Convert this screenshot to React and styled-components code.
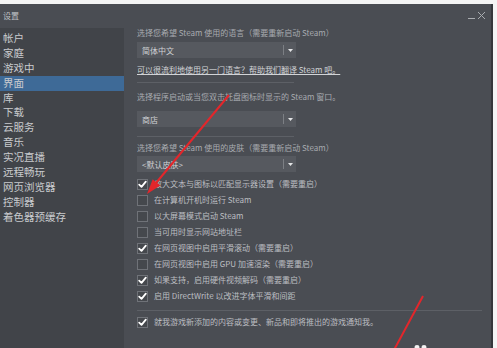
import React from 'react';
import styled, { createGlobalStyle } from 'styled-components';

const Global = createGlobalStyle`
  html, body { margin: 0; padding: 0; background: #f4f4f4; }
  body {
    width: 497px; height: 348px; overflow: hidden;
    font-family: "Noto Sans CJK SC", "Noto Sans", sans-serif;
  }
  * { box-sizing: border-box; }
`;

const Page = styled.div`
  position: relative;
  width: 497px;
  height: 348px;
  padding-top: 4px;
  background: #f4f4f4;
`;

const Window = styled.div`
  width: 493px;
  height: 344px;
  background: #4a4d53;
  border-right: 2px solid #35373b;
  display: flex;
  flex-direction: column;
  overflow: hidden;
`;

const TitleBar = styled.div`
  height: 24px;
  flex: none;
  display: flex;
  align-items: center;
  justify-content: space-between;
  padding: 0 4px 0 3px;
`;

const Title = styled.span`
  font-size: 8px;
  line-height: 10px;
  color: #bfc1c5;
`;

const Body = styled.div`
  flex: 1;
  display: flex;
  min-height: 0;
`;

const Sidebar = styled.nav`
  width: 124px;
  flex: none;
  background: #414449;
  padding-top: 3px;
  display: flex;
  flex-direction: column;
`;

const NavItem = styled.div`
  height: 14.9px;
  line-height: 14.9px;
  padding-left: 3px;
  font-size: 10.5px;
  color: #c9cbce;
  white-space: nowrap;
  background: ${(p) => (p.$active ? '#3e6a97' : 'transparent')};
`;

const Content = styled.main`
  flex: 1;
  padding-left: 13px;
  display: flex;
  flex-direction: column;
  align-items: flex-start;
`;

const Label = styled.div`
  font-size: 8px;
  line-height: 10px;
  height: 10px;
  color: #a8abb0;
  white-space: nowrap;
  margin-top: ${(p) => p.$mt || 0}px;
`;

const Link = styled.a`
  font-size: 8px;
  line-height: 10px;
  height: 10px;
  color: #d2d4d7;
  text-decoration: underline;
  white-space: nowrap;
  margin-top: ${(p) => p.$mt || 0}px;
`;

const Select = styled.div`
  width: 159px;
  height: 16px;
  background: #56595f;
  display: flex;
  align-items: center;
  margin-top: ${(p) => p.$mt || 0}px;
`;

const SelectText = styled.span`
  flex: 1;
  padding-left: 5px;
  font-size: 8px;
  color: #d0d2d5;
  white-space: nowrap;
`;

const SelectDivider = styled.span`
  width: 1px;
  height: 10px;
  background: #7c7f84;
`;

const SelectArrow = styled.span`
  width: 12px;
  display: flex;
  justify-content: center;
  align-items: center;
`;

const Rule = styled.div`
  height: 1px;
  width: ${(p) => p.$w}px;
  background: #5d6066;
  margin-top: ${(p) => p.$mt || 0}px;
`;

const CheckRow = styled.div`
  height: 16px;
  display: flex;
  align-items: center;
  gap: 6px;
  margin-top: ${(p) => p.$mt || 0}px;
`;

const Box = styled.span`
  width: 11px;
  height: 11px;
  border: 1px solid #6f7278;
  background: #45484d;
  display: flex;
  align-items: center;
  justify-content: center;
`;

const CheckText = styled.span`
  font-size: 8px;
  line-height: 10px;
  color: #bcbec2;
  white-space: nowrap;
`;

const Overlay = styled.svg`
  position: absolute;
  left: 0;
  top: 0;
  pointer-events: none;
`;

const navItems = ['帐户', '家庭', '游戏中', '界面', '库', '下载', '云服务', '音乐', '实况直播', '远程畅玩', '网页浏览器', '控制器', '着色器预缓存'];

const checks = [
  [true, '放大文本与图标以匹配显示器设置（需要重启）'],
  [false, '在计算机开机时运行 Steam'],
  [false, '以大屏幕模式启动 Steam'],
  [false, '当可用时显示网站地址栏'],
  [true, '在网页视图中启用平滑滚动（需要重启）'],
  [false, '在网页视图中启用 GPU 加速渲染（需要重启）'],
  [true, '如果支持，启用硬件视频解码（需要重启）'],
  [true, '启用 DirectWrite 以改进字体平滑和间距'],
];

function Check({ on }) {
  return (
    <Box>
      {on && (
        <svg width="9" height="9" viewBox="0 0 9 9">
          <path d="M1.2 4.6 L3.5 6.9 L7.8 1.6" fill="none" stroke="#ffffff" strokeWidth="1.8" strokeLinecap="round" strokeLinejoin="round" />
        </svg>
      )}
    </Box>
  );
}

function Dropdown({ value, mt }) {
  return (
    <Select $mt={mt}>
      <SelectText>{value}</SelectText>
      <SelectDivider />
      <SelectArrow>
        <svg width="5" height="3" viewBox="0 0 5 3">
          <path d="M0 0 L5 0 L2.5 3 Z" fill="#e4e5e7" />
        </svg>
      </SelectArrow>
    </Select>
  );
}

export default function App() {
  return (
    <>
      <Global />
      <Page>
        <Window>
          <TitleBar>
            <Title>设置</Title>
            <svg width="20" height="10" viewBox="0 0 20 10">
              <path d="M1 7.5 H8" stroke="#a9acb0" strokeWidth="1" />
              <path d="M11 1 L18 8 M18 1 L11 8" stroke="#a9acb0" strokeWidth="1" />
            </svg>
          </TitleBar>
          <Body>
            <Sidebar>
              {navItems.map((n) => (
                <NavItem key={n} $active={n === '界面'}>{n}</NavItem>
              ))}
            </Sidebar>
            <Content>
              <Label>选择您希望 Steam 使用的语言（需要重新启动 Steam）</Label>
              <Dropdown value="简体中文" mt={4} />
              <Link $mt={7}>可以很流利地使用另一门语言？帮助我们翻译 Steam 吧。</Link>
              <Rule $w={157} $mt={7} />
              <Label $mt={9}>选择程序启动或当您双击托盘图标时显示的 Steam 窗口。</Label>
              <Dropdown value="商店" mt={9} />
              <Rule $w={157} $mt={9} />
              <Label $mt={6}>选择您希望 Steam 使用的皮肤（需要重新启动 Steam）</Label>
              <Dropdown value="<默认皮肤>" mt={3} />
              {checks.map(([on, t], i) => (
                <CheckRow key={t} $mt={i === 0 ? 4 : 0}>
                  <Check on={on} />
                  <CheckText>{t}</CheckText>
                </CheckRow>
              ))}
              <Rule $w={345} $mt={6} />
              <CheckRow $mt={3}>
                <Check on />
                <CheckText>就我游戏新添加的内容或变更、新品和即将推出的游戏通知我。</CheckText>
              </CheckRow>
            </Content>
          </Body>
        </Window>
        <Overlay width="497" height="348" viewBox="0 0 497 348">
          <line x1="229" y1="95" x2="156" y2="183" stroke="#e3262b" strokeWidth="2" />
          <polygon points="147,194 160.4,185.6 152.7,179.2" fill="#e3262b" />
          <line x1="423" y1="296" x2="394" y2="350" stroke="#e3262b" strokeWidth="2" />
          <ellipse cx="417" cy="347" rx="2.5" ry="2" fill="#f2f2f2" />
          <ellipse cx="424" cy="347" rx="2.5" ry="2" fill="#f2f2f2" />
        </Overlay>
      </Page>
    </>
  );
}
